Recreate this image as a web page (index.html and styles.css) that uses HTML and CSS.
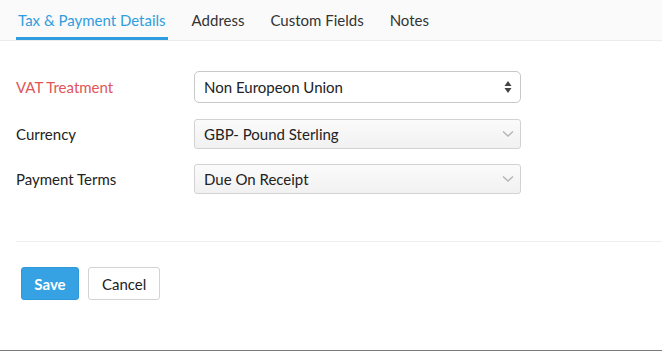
FILE: index.html
```html
<!DOCTYPE html>
<html>
<head>
<meta charset="utf-8">
<link rel="stylesheet" href="styles.css">
</head>
<body>
<div class="page">
  <nav class="tabs">
    <a class="tab active">Tax &amp; Payment Details</a>
    <a class="tab">Address</a>
    <a class="tab">Custom Fields</a>
    <a class="tab">Notes</a>
  </nav>
  <form class="form">
    <div class="row first">
      <label class="label required">VAT Treatment</label>
      <div class="select native">
        <span>Non Europeon Union</span>
        <svg class="updown" width="8" height="12" viewBox="0 0 8 12"><path d="M4 0 L7.5 5 H0.5 Z M4 12 L7.5 7 H0.5 Z" fill="#444"/></svg>
      </div>
    </div>
    <div class="row second">
      <label class="label">Currency</label>
      <div class="select grey">
        <span>GBP- Pound Sterling</span>
        <svg class="chev" width="12" height="8" viewBox="0 0 12 8"><path d="M1 1.5 L6 6 L11 1.5" fill="none" stroke="#b5b5b5" stroke-width="1.4"/></svg>
      </div>
    </div>
    <div class="row">
      <label class="label">Payment Terms</label>
      <div class="select grey">
        <span>Due On Receipt</span>
        <svg class="chev" width="12" height="8" viewBox="0 0 12 8"><path d="M1 1.5 L6 6 L11 1.5" fill="none" stroke="#b5b5b5" stroke-width="1.4"/></svg>
      </div>
    </div>
    <div class="divider"></div>
    <div class="actions">
      <button type="button" class="btn primary">Save</button>
      <button type="button" class="btn">Cancel</button>
    </div>
  </form>
</div>
</body>
</html>
```
FILE: styles.css
```css
* { box-sizing: border-box; }
html, body { margin: 0; padding: 0; background: #fff; }
body {
  font-family: "Lato", "Open Sans", sans-serif;
  font-size: 15px;
  color: #222;
}
.page {
  height: 351px;
  border-bottom: 1px solid #7a7a7a;
}
.tabs {
  display: flex;
  height: 41px;
  padding-left: 16px;
  background: #fafafa;
  border-bottom: 1px solid #ececec;
}
.tab {
  padding: 11px 2px 0;
  margin-right: 22px;
  height: 40px;
  font-size: 15px;
  color: #333;
  border-bottom: 3px solid transparent;
}
.tab.active {
  color: #2f9de0;
  border-bottom-color: #2f9de0;
}
.form {
  padding: 30px 0 0 16px;
}
.row {
  display: flex;
  align-items: center;
  height: 30px;
  margin-bottom: 16px;
}
.row.first {
  height: 32px;
  margin-bottom: 16px;
}
.row.second { margin-bottom: 15px; }
.label {
  width: 178px;
  font-size: 15px;
  color: #222;
}
.label.required { color: #e0555a; }
.select {
  width: 327px;
  height: 100%;
  display: flex;
  align-items: center;
  justify-content: space-between;
  padding: 0 8px 0 9px;
  border: 1px solid #ccc;
  border-radius: 4px;
  font-size: 15px;
  color: #222;
}
.select.native {
  background: #fff;
  border-color: #c8c8c8;
  border-radius: 5px;
}
.select.grey {
  background: linear-gradient(#fbfbfb, #f1f1f1);
  border-color: #d2d2d2;
  border-radius: 3px;
  padding-right: 6px;
}
.divider {
  margin-top: 47px;
  height: 1px;
  background: #efefef;
}
.actions {
  display: flex;
  gap: 9px;
  padding: 25px 0 0 5px;
}
.btn {
  height: 33px;
  padding: 0 13px;
  font-family: "Lato", "Open Sans", sans-serif;
  font-size: 15px;
  color: #222;
  background: #fff;
  border: 1px solid #d3d3d3;
  border-radius: 3px;
}
.btn.primary {
  background: #36a2e4;
  border-color: #2f98d8;
  color: #fff;
  font-weight: bold;
  width: 58px;
  padding: 0;
}
```
